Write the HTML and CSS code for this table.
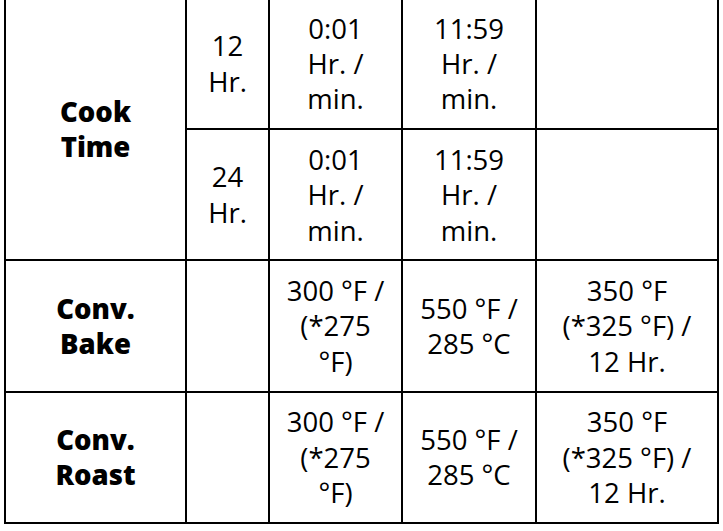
FILE: index.html
```html
<!DOCTYPE html>
<html lang="en">
<head>
<meta charset="utf-8">
<title>Cook settings</title>
<link rel="stylesheet" href="styles.css">
</head>
<body>
<table class="spec">
  <colgroup>
    <col class="c1"><col class="c2"><col class="c3"><col class="c4"><col class="c5">
  </colgroup>
  <tbody>
    <tr>
      <th rowspan="2">Cook<br>Time</th>
      <td>12<br>Hr.</td>
      <td>0:01<br>Hr. /<br>min.</td>
      <td>11:59<br>Hr. /<br>min.</td>
      <td></td>
    </tr>
    <tr>
      <td>24<br>Hr.</td>
      <td>0:01<br>Hr. /<br>min.</td>
      <td>11:59<br>Hr. /<br>min.</td>
      <td></td>
    </tr>
    <tr>
      <th>Conv.<br>Bake</th>
      <td></td>
      <td>300 °F /<br>(*275<br>°F)</td>
      <td>550 °F /<br>285 °C</td>
      <td>350 °F<br>(*325 °F) /<br>12 Hr.</td>
    </tr>
    <tr>
      <th>Conv.<br>Roast</th>
      <td></td>
      <td>300 °F /<br>(*275<br>°F)</td>
      <td>550 °F /<br>285 °C</td>
      <td>350 °F<br>(*325 °F) /<br>12 Hr.</td>
    </tr>
  </tbody>
</table>
</body>
</html>
```
FILE: styles.css
```css
html, body {
  margin: 0;
  padding: 0;
  background: #fff;
}
body {
  font-family: "Open Sans", "Noto Sans", sans-serif;
  font-size: 27.5px;
  color: #000;
  overflow: hidden;
}
.spec {
  border-collapse: collapse;
  table-layout: fixed;
  width: 715px;
  margin: -3px 0 0 4px;
}
.c1 { width: 181px; }
.c2 { width: 83px; }
.c3 { width: 133px; }
.c4 { width: 134px; }
.c5 { width: 182px; }
.spec th,
.spec td {
  border: 2px solid #000;
  text-align: center;
  vertical-align: middle;
  padding: 11.5px 2px;
  line-height: 35.4px;
  height: 106px;
}
.spec th {
  font-weight: 800;
}
.spec td {
  font-weight: 400;
}
```
